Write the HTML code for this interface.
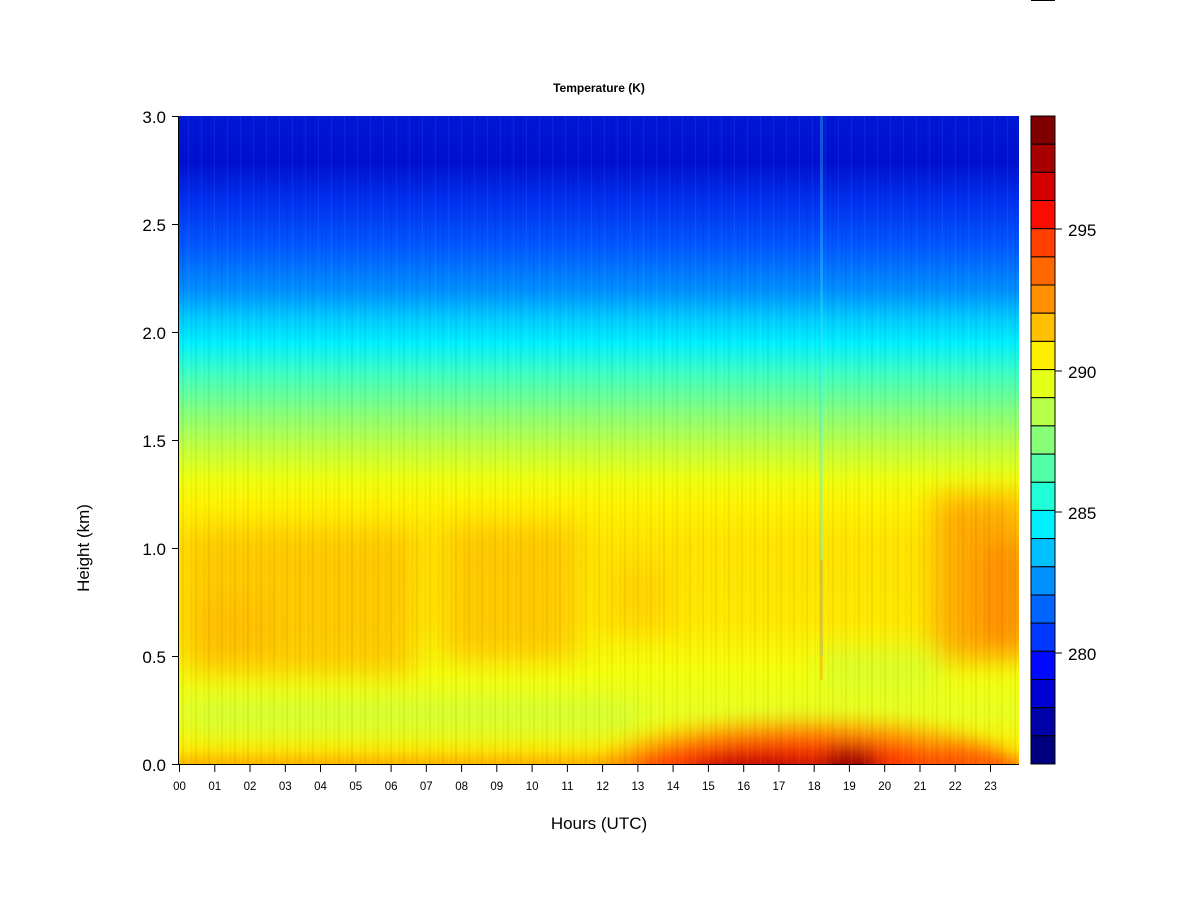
<!DOCTYPE html>
<html><head><meta charset="utf-8"><style>
html,body{margin:0;padding:0;background:#fff;}
body{width:1200px;height:900px;overflow:hidden;}
svg text{font-family:"Liberation Sans",Arial,sans-serif;}
</style></head><body>
<svg width="1200" height="900" viewBox="0 0 1200 900" xmlns="http://www.w3.org/2000/svg">
<defs>
<linearGradient id="prof" x1="0" y1="116" x2="0" y2="764" gradientUnits="userSpaceOnUse">
<stop offset="0" stop-color="#0018d8"/>
<stop offset="0.07" stop-color="#0010d0"/>
<stop offset="0.13" stop-color="#0030f0"/>
<stop offset="0.2" stop-color="#0058ff"/>
<stop offset="0.27" stop-color="#0090ff"/>
<stop offset="0.31" stop-color="#00c8ff"/>
<stop offset="0.35" stop-color="#00f0ff"/>
<stop offset="0.4" stop-color="#40ffc0"/>
<stop offset="0.46" stop-color="#88ff78"/>
<stop offset="0.51" stop-color="#c0ff40"/>
<stop offset="0.56" stop-color="#eeff10"/>
<stop offset="0.6" stop-color="#fff200"/>
<stop offset="0.66" stop-color="#ffe400"/>
<stop offset="0.78" stop-color="#ffe800"/>
<stop offset="0.86" stop-color="#f4ff0c"/>
<stop offset="0.92" stop-color="#e8ff20"/>
<stop offset="0.98" stop-color="#fff000"/>
<stop offset="1" stop-color="#ffc000"/>
</linearGradient>
<filter id="b1" x="-50%" y="-50%" width="200%" height="200%"><feGaussianBlur stdDeviation="14"/></filter>
<filter id="b2" x="-50%" y="-50%" width="200%" height="200%"><feGaussianBlur stdDeviation="10"/></filter>
<pattern id="stripes" width="13" height="10" patternUnits="userSpaceOnUse">
<rect x="0" y="0" width="2" height="10" fill="#000" opacity="0.05"/>
<rect x="6" y="0" width="1" height="10" fill="#fff" opacity="0.06"/>
<rect x="9" y="0" width="1" height="10" fill="#000" opacity="0.04"/>
</pattern>
<clipPath id="pc"><rect x="179" y="116" width="840" height="648"/></clipPath>
</defs>
<g clip-path="url(#pc)">
<rect x="179" y="116" width="840" height="648" fill="url(#prof)"/>
<g filter="url(#b1)" opacity="0.85">
<rect x="185" y="530" width="230" height="145" fill="#ffc400"/>
<rect x="445" y="525" width="130" height="135" fill="#ffc400"/>
<rect x="190" y="600" width="80" height="60" fill="#ffb800"/>
<rect x="935" y="495" width="90" height="165" fill="#ffa000"/>
<rect x="980" y="540" width="50" height="110" fill="#ff8000"/>
<rect x="610" y="560" width="60" height="70" fill="#ffd200"/>
</g>
<g filter="url(#b1)" opacity="0.6">
<rect x="190" y="700" width="450" height="35" fill="#c8ff40"/>
<rect x="820" y="650" width="120" height="40" fill="#c8ff40"/>
</g>
<g filter="url(#b2)">
<rect x="179" y="756" width="840" height="16" fill="#ffb000" opacity="0.8"/>
<ellipse cx="810" cy="772" rx="210" ry="50" fill="#ff9000" opacity="0.85"/>
<ellipse cx="800" cy="775" rx="170" ry="38" fill="#ff3000" opacity="0.9"/>
<ellipse cx="760" cy="772" rx="70" ry="18" fill="#c00000"/>
<ellipse cx="850" cy="768" rx="30" ry="22" fill="#a00000"/>
<ellipse cx="960" cy="772" rx="60" ry="26" fill="#ff5000" opacity="0.8"/>
</g>
<rect x="179" y="116" width="840" height="648" fill="url(#stripes)"/>
<rect x="820" y="116" width="3" height="540" fill="#40f0ff" opacity="0.3"/>
<rect x="820" y="560" width="3" height="120" fill="#ff9800" opacity="0.4"/>
</g>
<g stroke="#000" stroke-width="1">
<rect x="1031" y="116.0" width="24" height="28.17" fill="#7f0000"/>
<rect x="1031" y="144.2" width="24" height="28.17" fill="#a80000"/>
<rect x="1031" y="172.3" width="24" height="28.17" fill="#d40000"/>
<rect x="1031" y="200.5" width="24" height="28.17" fill="#fa0c00"/>
<rect x="1031" y="228.7" width="24" height="28.17" fill="#ff4000"/>
<rect x="1031" y="256.9" width="24" height="28.17" fill="#ff6800"/>
<rect x="1031" y="285.0" width="24" height="28.17" fill="#ff9000"/>
<rect x="1031" y="313.2" width="24" height="28.17" fill="#ffc000"/>
<rect x="1031" y="341.4" width="24" height="28.17" fill="#ffee00"/>
<rect x="1031" y="369.6" width="24" height="28.17" fill="#e4ff18"/>
<rect x="1031" y="397.7" width="24" height="28.17" fill="#b8ff48"/>
<rect x="1031" y="425.9" width="24" height="28.17" fill="#88ff78"/>
<rect x="1031" y="454.1" width="24" height="28.17" fill="#50ffa8"/>
<rect x="1031" y="482.3" width="24" height="28.17" fill="#20ffd8"/>
<rect x="1031" y="510.4" width="24" height="28.17" fill="#00f0ff"/>
<rect x="1031" y="538.6" width="24" height="28.17" fill="#00c0ff"/>
<rect x="1031" y="566.8" width="24" height="28.17" fill="#0090ff"/>
<rect x="1031" y="595.0" width="24" height="28.17" fill="#0064ff"/>
<rect x="1031" y="623.1" width="24" height="28.17" fill="#0038ff"/>
<rect x="1031" y="651.3" width="24" height="28.17" fill="#0008ff"/>
<rect x="1031" y="679.5" width="24" height="28.17" fill="#0000d4"/>
<rect x="1031" y="707.7" width="24" height="28.17" fill="#0000a8"/>
<rect x="1031" y="735.8" width="24" height="28.17" fill="#00007f"/>
<line x1="1055" y1="229" x2="1062" y2="229"/>
<line x1="1055" y1="371" x2="1062" y2="371"/>
<line x1="1055" y1="512" x2="1062" y2="512"/>
<line x1="1055" y1="653" x2="1062" y2="653"/>
<line x1="1031" y1="0.5" x2="1055" y2="0.5"/>
</g>
<g font-size="17" fill="#000">
<text x="1068" y="236">295</text>
<text x="1068" y="378">290</text>
<text x="1068" y="519">285</text>
<text x="1068" y="660">280</text>
</g>
<g stroke="#000" stroke-width="1">
<line x1="178.5" y1="116" x2="178.5" y2="764"/>
<line x1="172" y1="116.5" x2="179" y2="116.5"/>
<line x1="172" y1="224.5" x2="179" y2="224.5"/>
<line x1="172" y1="332.5" x2="179" y2="332.5"/>
<line x1="172" y1="440.5" x2="179" y2="440.5"/>
<line x1="172" y1="548.5" x2="179" y2="548.5"/>
<line x1="172" y1="656.5" x2="179" y2="656.5"/>
<line x1="172" y1="764.5" x2="1019" y2="764.5"/>
</g>
<g font-size="17" fill="#000" text-anchor="end">
<text x="166" y="123">3.0</text>
<text x="166" y="231">2.5</text>
<text x="166" y="339">2.0</text>
<text x="166" y="447">1.5</text>
<text x="166" y="555">1.0</text>
<text x="166" y="663">0.5</text>
<text x="166" y="771">0.0</text>
</g>
<text x="599" y="92" font-size="12" font-weight="bold" text-anchor="middle">Temperature (K)</text>
<text x="599" y="829" font-size="17" text-anchor="middle">Hours (UTC)</text>
<text transform="translate(89,548) rotate(-90)" font-size="17" text-anchor="middle">Height (km)</text>
<g stroke="#000">
<line x1="179.5" y1="764" x2="179.5" y2="772"/><line x1="214.8" y1="764" x2="214.8" y2="772"/><line x1="250.0" y1="764" x2="250.0" y2="772"/><line x1="285.3" y1="764" x2="285.3" y2="772"/><line x1="320.5" y1="764" x2="320.5" y2="772"/><line x1="355.8" y1="764" x2="355.8" y2="772"/><line x1="391.1" y1="764" x2="391.1" y2="772"/><line x1="426.3" y1="764" x2="426.3" y2="772"/><line x1="461.6" y1="764" x2="461.6" y2="772"/><line x1="496.8" y1="764" x2="496.8" y2="772"/><line x1="532.1" y1="764" x2="532.1" y2="772"/><line x1="567.4" y1="764" x2="567.4" y2="772"/><line x1="602.6" y1="764" x2="602.6" y2="772"/><line x1="637.9" y1="764" x2="637.9" y2="772"/><line x1="673.1" y1="764" x2="673.1" y2="772"/><line x1="708.4" y1="764" x2="708.4" y2="772"/><line x1="743.7" y1="764" x2="743.7" y2="772"/><line x1="778.9" y1="764" x2="778.9" y2="772"/><line x1="814.2" y1="764" x2="814.2" y2="772"/><line x1="849.4" y1="764" x2="849.4" y2="772"/><line x1="884.7" y1="764" x2="884.7" y2="772"/><line x1="920.0" y1="764" x2="920.0" y2="772"/><line x1="955.2" y1="764" x2="955.2" y2="772"/><line x1="990.5" y1="764" x2="990.5" y2="772"/>
</g>
<g font-size="11.5" fill="#000" text-anchor="middle">
<text x="179.5" y="790">00</text><text x="214.8" y="790">01</text><text x="250.0" y="790">02</text><text x="285.3" y="790">03</text><text x="320.5" y="790">04</text><text x="355.8" y="790">05</text><text x="391.1" y="790">06</text><text x="426.3" y="790">07</text><text x="461.6" y="790">08</text><text x="496.8" y="790">09</text><text x="532.1" y="790">10</text><text x="567.4" y="790">11</text><text x="602.6" y="790">12</text><text x="637.9" y="790">13</text><text x="673.1" y="790">14</text><text x="708.4" y="790">15</text><text x="743.7" y="790">16</text><text x="778.9" y="790">17</text><text x="814.2" y="790">18</text><text x="849.4" y="790">19</text><text x="884.7" y="790">20</text><text x="920.0" y="790">21</text><text x="955.2" y="790">22</text><text x="990.5" y="790">23</text>
</g>
</svg>
</body></html>
